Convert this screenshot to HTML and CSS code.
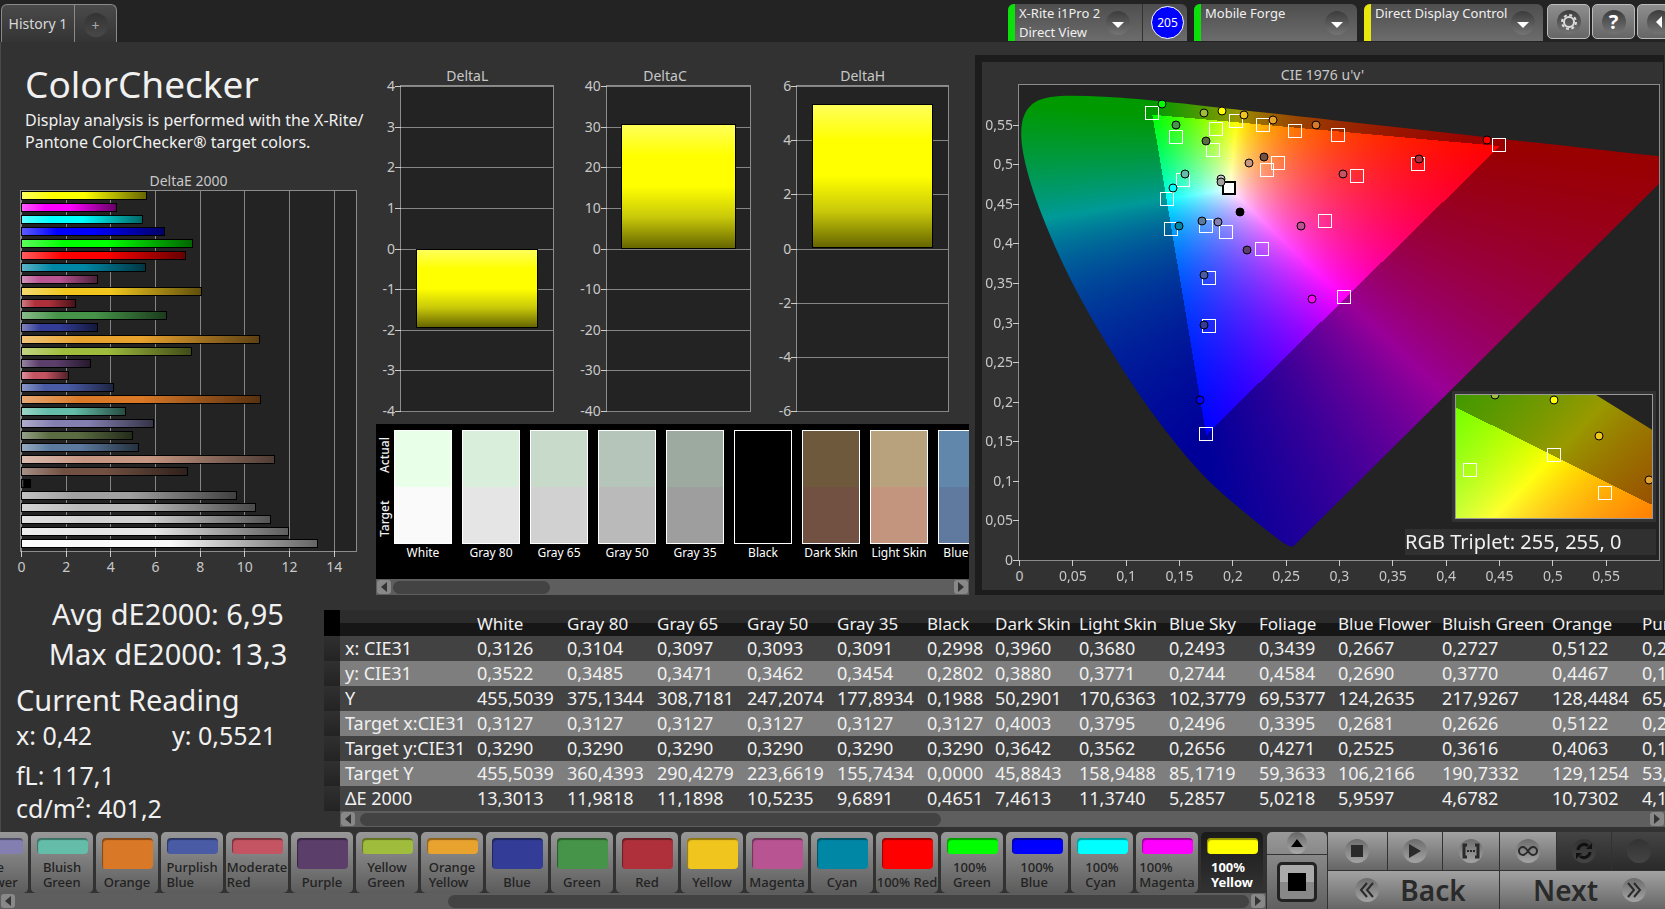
FILE: index.html
```html
<!DOCTYPE html>
<html lang="en">
<head>
    <title>ColorChecker</title>
    <meta charset="utf-8">
    <meta name="viewport" content="width=device-width, initial-scale=1.0">
    <link rel="stylesheet" href="styles.css">
</head>
<body>

    <header class="topbar">
        <nav class="tabs">
            <button class="tab">History 1</button>
            <button class="tab tab-add" aria-label="Add tab"><span class="knob">+</span></button>
        </nav>
        <div class="devices">
            <button class="device device-meter">
                <span class="strip green"></span>
                <span class="device-name">X-Rite i1Pro 2<br>Direct View</span>
                <span class="knob drop"><svg width="14" height="8"><path d="M1 1H13L7 7Z"/></svg></span>
                <span class="split"></span>
                <span class="badge">205</span>
            </button>
            <button class="device device-source">
                <span class="strip green"></span>
                <span class="device-name">Mobile Forge</span>
                <span class="knob drop"><svg width="14" height="8"><path d="M1 1H13L7 7Z"/></svg></span>
            </button>
            <button class="device device-display">
                <span class="strip yellow"></span>
                <span class="device-name">Direct Display Control</span>
                <span class="knob drop"><svg width="14" height="8"><path d="M1 1H13L7 7Z"/></svg></span>
            </button>
            <button class="tool" aria-label="Settings"><span class="knob">
                <svg width="20" height="20" viewBox="0 0 20 20"><circle cx="10" cy="10" r="5" fill="none" stroke="#ddd" stroke-width="2"/><circle cx="10" cy="10" r="7" fill="none" stroke="#ddd" stroke-width="2" stroke-dasharray="3 2.5"/></svg>
            </span></button>
            <button class="tool" aria-label="Help"><span class="knob">?</span></button>
            <button class="tool" aria-label="Collapse"><span class="knob"><svg width="8" height="14"><path d="M7 1V13L1 7Z" fill="#fff"/></svg></span></button>
        </div>
    </header>

    <main class="page">
        <div class="upper">
            <section class="intro">
                <h1>ColorChecker</h1>
                <p>Display analysis is performed with the X-Rite/<br>Pantone ColorChecker® target colors.</p>
                <h2 class="chart-title">DeltaE 2000</h2>
                <div class="plot de-plot" id="de"></div>
            </section>

            <section class="middle">
                <div class="deltas">
                    <div class="delta delta-l"><h2 class="chart-title">DeltaL</h2><div class="plot" id="dl"></div></div>
                    <div class="delta delta-c"><h2 class="chart-title">DeltaC</h2><div class="plot" id="dc"></div></div>
                    <div class="delta delta-h"><h2 class="chart-title">DeltaH</h2><div class="plot" id="dh"></div></div>
                </div>
                <div class="compare">
                    <div class="compare-row">
                        <div class="compare-side"><span>Actual</span><span>Target</span></div>
                        <div class="patches" id="patches"></div>
                    </div>
                    <div class="scrollbar scroll-patches">
                        <button class="arrow" aria-label="Left"><svg width="6" height="10"><path d="M6 0V10L0 5Z"/></svg></button>
                        <div class="track"><div class="thumb"></div></div>
                        <button class="arrow" aria-label="Right"><svg width="6" height="10"><path d="M0 0V10L6 5Z"/></svg></button>
                    </div>
                </div>
            </section>

            <section class="cie">
                <div class="cie-inner">
                    <h2 class="chart-title">CIE 1976 u'v'</h2>
                    <div class="plot cie-plot" id="cie">
                        <canvas id="cie-canvas"></canvas>
                        <div class="marks" id="cie-marks"></div>
                        <div class="inset"><div class="inset-view">
                            <canvas id="inset-canvas"></canvas>
                            <div class="marks clip" id="inset-marks"></div>
                        </div></div>
                        <div class="triplet">RGB Triplet: 255, 255, 0</div>
                    </div>
                </div>
            </section>
        </div>

        <div class="lower">
            <section class="stats">
                <div class="summary">Avg dE2000: 6,95</div>
                <div class="summary">Max dE2000: 13,3</div>
                <h2>Current Reading</h2>
                <div class="reading"><span>x: 0,42</span><span>y: 0,5521</span></div>
                <div class="reading lum">fL: 117,1</div>
                <div class="reading">cd/m²: 401,2</div>
            </section>

            <section class="results">
                <div class="table-view">
                <table>
                    <colgroup><col class="w-mark"><col class="w-label"><col class="w90"><col class="w90"><col class="w90"><col class="w90"><col class="w90"><col class="w68"><col class="w84"><col class="w90"><col class="w90"><col class="w79"><col class="w104"><col class="w110"><col class="w90"><col class="w110"></colgroup>
                    <thead>
                        <tr><th class="mark"></th><th></th><th>White</th><th>Gray 80</th><th>Gray 65</th><th>Gray 50</th><th>Gray 35</th><th>Black</th><th>Dark Skin</th><th>Light Skin</th><th>Blue Sky</th><th>Foliage</th><th>Blue Flower</th><th>Bluish Green</th><th>Orange</th><th>Purplish Blue</th></tr>
                    </thead>
                    <tbody>
                        <tr><td class="mark"></td><th>x: CIE31</th><td>0,3126</td><td>0,3104</td><td>0,3097</td><td>0,3093</td><td>0,3091</td><td>0,2998</td><td>0,3960</td><td>0,3680</td><td>0,2493</td><td>0,3439</td><td>0,2667</td><td>0,2727</td><td>0,5122</td><td>0,2146</td></tr>
                        <tr><td class="mark"></td><th>y: CIE31</th><td>0,3522</td><td>0,3485</td><td>0,3471</td><td>0,3462</td><td>0,3454</td><td>0,2802</td><td>0,3880</td><td>0,3771</td><td>0,2744</td><td>0,4584</td><td>0,2690</td><td>0,3770</td><td>0,4467</td><td>0,1977</td></tr>
                        <tr><td class="mark"></td><th>Y</th><td>455,5039</td><td>375,1344</td><td>308,7181</td><td>247,2074</td><td>177,8934</td><td>0,1988</td><td>50,2901</td><td>170,6363</td><td>102,3779</td><td>69,5377</td><td>124,2635</td><td>217,9267</td><td>128,4484</td><td>65,1830</td></tr>
                        <tr><td class="mark"></td><th>Target x:CIE31</th><td>0,3127</td><td>0,3127</td><td>0,3127</td><td>0,3127</td><td>0,3127</td><td>0,3127</td><td>0,4003</td><td>0,3795</td><td>0,2496</td><td>0,3395</td><td>0,2681</td><td>0,2626</td><td>0,5122</td><td>0,2158</td></tr>
                        <tr><td class="mark"></td><th>Target y:CIE31</th><td>0,3290</td><td>0,3290</td><td>0,3290</td><td>0,3290</td><td>0,3290</td><td>0,3290</td><td>0,3642</td><td>0,3562</td><td>0,2656</td><td>0,4271</td><td>0,2525</td><td>0,3616</td><td>0,4063</td><td>0,1909</td></tr>
                        <tr><td class="mark"></td><th>Target Y</th><td>455,5039</td><td>360,4393</td><td>290,4279</td><td>223,6619</td><td>155,7434</td><td>0,0000</td><td>45,8843</td><td>158,9488</td><td>85,1719</td><td>59,3633</td><td>106,2166</td><td>190,7332</td><td>129,1254</td><td>53,4120</td></tr>
                        <tr><td class="mark"></td><th>ΔE 2000</th><td>13,3013</td><td>11,9818</td><td>11,1898</td><td>10,5235</td><td>9,6891</td><td>0,4651</td><td>7,4613</td><td>11,3740</td><td>5,2857</td><td>5,0218</td><td>5,9597</td><td>4,6782</td><td>10,7302</td><td>4,1602</td></tr>
                    </tbody>
                </table>
                </div>
                <div class="scrollbar scroll-table">
                    <button class="arrow" aria-label="Left"><svg width="6" height="10"><path d="M6 0V10L0 5Z"/></svg></button>
                    <div class="track"><div class="thumb"></div></div>
                    <button class="arrow" aria-label="Right"><svg width="6" height="10"><path d="M0 0V10L6 5Z"/></svg></button>
                </div>
            </section>
        </div>
    </main>

    <footer class="dock">
        <div class="picker">
            <div class="chips" id="chips"></div>
            <div class="scrollbar scroll-chips">
                <button class="arrow" aria-label="Left"><svg width="6" height="10"><path d="M6 0V10L0 5Z"/></svg></button>
                <div class="track"><div class="thumb"></div></div>
                <button class="arrow" aria-label="Right"><svg width="6" height="10"><path d="M0 0V10L6 5Z"/></svg></button>
            </div>
        </div>
        <div class="window-ctl">
            <button class="up" aria-label="Expand"><span class="knob"><svg width="12" height="8"><path d="M0 8H12L6 0Z"/></svg></span></button>
            <button class="pattern" aria-label="Pattern window"><span></span></button>
        </div>
        <div class="transport">
            <button aria-label="Stop"><span class="knob"><svg width="12" height="12"><rect width="12" height="12"/></svg></span></button>
            <button aria-label="Play"><span class="knob"><svg width="12" height="14"><path d="M0 0L12 7L0 14Z"/></svg></span></button>
            <button aria-label="Step"><span class="knob"><svg width="18" height="16" viewBox="0 0 18 16"><path d="M5 2H2V14H5M13 2H16V14H13" fill="none" stroke="#2a2a2a" stroke-width="3"/><path d="M5 7h2v2H5zM8 7h2v2H8zM11 7h2v2h-2z"/></svg></span></button>
            <button aria-label="Continuous"><span class="knob"><svg width="20" height="12" viewBox="0 0 20 12"><path d="M10 6C8 3 7 2 5 2a4 4 0 0 0 0 8C7 10 8 9 10 6C12 3 13 2 15 2a4 4 0 0 1 0 8C13 10 12 9 10 6Z" fill="none" stroke="#2a2a2a" stroke-width="2"/></svg></span></button>
            <button class="off" aria-label="Refresh"><span class="knob"><svg width="18" height="18" viewBox="0 0 18 18"><path d="M3 8A6 6 0 0 1 13 4M15 10A6 6 0 0 1 5 14" fill="none" stroke="#111" stroke-width="3"/><path d="M11 7h6V1zM7 11H1v6z" fill="#111"/></svg></span></button>
            <button class="off" aria-label="Record"><span class="knob"></span></button>
            <button class="step back"><span class="knob"><svg width="16" height="16" viewBox="0 0 16 16"><path d="M8 1L2 8L8 15M14 1L8 8L14 15" fill="none" stroke="#2a2a2a" stroke-width="2"/></svg></span>Back</button>
            <button class="step next">Next<span class="knob"><svg width="16" height="16" viewBox="0 0 16 16"><path d="M2 1L8 8L2 15M8 1L14 8L8 15" fill="none" stroke="#2a2a2a" stroke-width="2"/></svg></span></button>
        </div>
    </footer>

    <script src="charts.js"></script>
</body>
</html>
```
FILE: styles.css
```css
* {
    box-sizing: border-box;
}

body {
    margin: 0;
    min-height: 100vh;
    display: flex;
    flex-direction: column;
    background: #323232;
    color: #f0f0f0;
    font-family: "Noto Sans", "Open Sans", sans-serif;
    font-size: 14px;
    overflow: hidden;
}

h1, h2, p {
    margin: 0;
    font-weight: normal;
}

button {
    margin: 0;
    padding: 0;
    border: 0;
    font-family: inherit;
    color: inherit;
    cursor: pointer;
}

svg {
    display: block;
}

.knob {
    flex: none;
    display: flex;
    align-items: center;
    justify-content: center;
    width: 24px;
    height: 24px;
    border-radius: 50%;
    background: linear-gradient(#3c3c3c, #747474);
}

/* top bar */
.topbar {
    display: flex;
    justify-content: space-between;
    align-items: flex-start;
    height: 42px;
    padding: 4px 0 0 1px;
    background: #232323;
    overflow: hidden;
}

.tabs {
    display: flex;
    height: 38px;
    border: 1px solid #8a8a8a;
    border-bottom: 0;
    border-radius: 6px 6px 0 0;
    background: linear-gradient(#4a4a4a, #343434);
}

.tab {
    width: 72px;
    background: none;
    color: #d8d8d8;
    font-size: 14px;
}

.tab-add {
    display: flex;
    align-items: center;
    justify-content: center;
    width: 42px;
    padding-top: 3px;
    border-left: 1px solid #8a8a8a;
}

.tab-add .knob {
    background: linear-gradient(#333, #484848);
    color: #aaa;
}

.devices {
    display: flex;
    flex: none;
    width: 657px;
}

.device {
    flex: none;
    display: flex;
    align-items: center;
    height: 37px;
    margin-right: 7px;
    border-radius: 6px 6px 0 0;
    background: linear-gradient(#4e4e4e, #6c6c6c);
    overflow: hidden;
}

.device-meter { width: 179px; }
.device-source { width: 163px; }
.device-display { width: 179px; margin-right: 4px; }

.strip {
    width: 7px;
    height: 37px;
}

.green { background: #0be00b; }
.yellow { background: #e8e80c; }

.device-name {
    flex: 1;
    height: 37px;
    padding-left: 4px;
    font-size: 13px;
    line-height: 19px;
    text-align: left;
    white-space: nowrap;
}

.drop {
    margin-right: 8px;
    padding-top: 4px;
}

.drop svg {
    fill: #fff;
}

.device-meter .drop {
    margin-right: 12px;
}

.split {
    width: 1px;
    height: 37px;
    background: #333;
}

.badge {
    width: 33px;
    height: 33px;
    margin-right: 3px;
    margin-left: 8px;
    border: 1px solid #fff;
    border-radius: 50%;
    background: #0000ff;
    color: #fff;
    font-size: 12px;
    line-height: 31px;
}

.tool {
    flex: none;
    display: flex;
    align-items: center;
    justify-content: center;
    width: 43px;
    height: 35px;
    margin-right: 2px;
    border: 1px solid #bbb;
    border-radius: 5px;
    background: linear-gradient(#8e8e8e, #666);
    color: #fff;
    font-size: 20px;
    font-weight: bold;
}

/* upper area */
.page {
    flex: 1;
    border-left: 1px solid #4a4a4a;
}

.upper {
    display: grid;
    grid-template-columns: 374px minmax(0, 600fr) minmax(0, 690fr);
    height: 552px;
}

.intro {
    padding: 16px 0 0 19px;
}

.intro h1 {
    margin-left: 5px;
    font-size: 37px;
    line-height: 51px;
}

.intro p {
    margin-left: 5px;
    font-size: 16px;
    line-height: 22px;
    white-space: nowrap;
}

.chart-title {
    color: #c8c8c8;
    font-size: 14px;
    line-height: 18px;
    text-align: center;
}

.plot {
    position: relative;
    border: 1px solid #8c8c8c;
    background: #232323;
    color: #c8c8c8;
}

.intro .chart-title {
    width: 337px;
    margin-top: 19px;
}

.de-plot {
    width: 337px;
    height: 362px;
}

.bars {
    display: grid;
    row-gap: 3px;
    position: relative;
}

.bar {
    height: 9px;
    border: 1px solid #000;
    background-image: linear-gradient(90deg, rgba(255, 255, 255, .36), transparent 25%, transparent 50%, rgba(0, 0, 0, .6));
}

.grid-x, .grid-y {
    position: absolute;
    background: #858585;
}

.grid-x { top: 0; bottom: 0; width: 1px; }
.grid-y { left: 0; right: 0; height: 1px; }

.grid-x span {
    position: absolute;
    top: 100%;
    left: -20px;
    width: 41px;
    padding-top: 6px;
    line-height: 20px;
    text-align: center;
}

.grid-x span::before {
    content: "";
    position: absolute;
    top: 0;
    left: 20px;
    width: 1px;
    height: 6px;
    background: #ccc;
}

.grid-y span {
    position: absolute;
    right: 100%;
    top: -10px;
    padding-right: 6px;
    line-height: 20px;
    white-space: nowrap;
}

.grid-y span::before {
    content: "";
    position: absolute;
    top: 10px;
    right: 0;
    width: 6px;
    height: 1px;
    background: #ccc;
}

.middle {
    padding-top: 25px;
}

.deltas {
    display: grid;
    grid-template-columns: 1fr 1fr 1fr;
    column-gap: 25px;
    padding: 0 26px 0 6px;
}

.delta .plot { height: 327px; }
.delta-l .plot { margin-left: 19px; }
.delta-c .plot { margin-left: 27px; }
.delta-h .plot { margin-left: 20px; }

.column {
    position: absolute;
    left: 10%;
    right: 10%;
    border: 1px solid #000;
    background: linear-gradient(#ffff5a, #ffff00 25%, #ffff00 50%, #c8c80a 75%, #666600);
}

.compare {
    margin: 12px 6px 0 1px;
    background: #000;
    overflow: hidden;
}

.compare-row {
    display: flex;
    height: 155px;
    padding-top: 6px;
}

.compare-side {
    flex: none;
    display: flex;
    width: 18px;
    height: 114px;
    padding: 7px 0;
    writing-mode: vertical-rl;
    transform: rotate(180deg);
    flex-direction: row-reverse;
    justify-content: space-between;
    line-height: 18px;
    font-size: 12px;
    font-weight: 500;
}

.patches {
    display: flex;
    column-gap: 10px;
    overflow: hidden;
}

.patch {
    flex: none;
    width: 58px;
    color: #fff;
    font-size: 12px;
    line-height: 18px;
    text-align: center;
    white-space: nowrap;
}

.patch-color {
    display: grid;
    grid-template-rows: 1fr 1fr;
    height: 114px;
    border: 1px solid #fff;
}

/* scroll bars */
.scrollbar {
    display: flex;
    align-items: center;
    height: 16px;
    padding: 1px;
    background: #5e5e5e;
}

.arrow {
    flex: none;
    display: flex;
    align-items: center;
    justify-content: center;
    width: 14px;
    height: 14px;
    border-radius: 3px;
    background: #888;
}

.arrow svg {
    fill: #333;
}

.track {
    flex: 1;
    padding: 0 2px;
}

.thumb {
    height: 13px;
    border-radius: 7px;
    background: #434343;
}

.scroll-patches .thumb { width: 28%; }
.scroll-table .thumb { width: 45%; margin-left: 3px; }
.scroll-chips .thumb { width: 65%; margin-left: auto; }

/* chromaticity */
.cie {
    margin: 13px 1px 0 0;
    border: 7px solid #1c1c1c;
    border-right-width: 1px;
    border-bottom-width: 5px;
    background: #323232;
}

.cie-inner {
    padding: 4px 3px 28px 36px;
}

.cie-plot {
    height: 477px;
}

.cie .chart-title {
    margin-left: -33px;
}

canvas {
    display: block;
    width: 100%;
    height: 100%;
}

.marks {
    position: absolute;
    top: 0;
    right: 0;
    bottom: 0;
    left: 0;
}

.clip {
    overflow: hidden;
}

.target, .actual {
    position: absolute;
    transform: translate(-50%, -50%);
}

.target {
    width: 14px;
    height: 14px;
    border: 1px solid #fff;
}

.target.current {
    border: 2px solid #000;
}

.actual {
    width: 9px;
    height: 9px;
    border: 1px solid #000;
    border-radius: 50%;
}

.inset {
    position: absolute;
    right: 3px;
    bottom: 38px;
    width: 204px;
    height: 131px;
    padding: 3px;
    background: #323232;
}

.inset-view {
    position: relative;
    height: 125px;
    border: 1px solid #999;
    background: #232323;
}

.triplet {
    position: absolute;
    right: 3px;
    bottom: 5px;
    width: 251px;
    background: #303030;
    color: #f0f0f0;
    font-size: 20px;
    line-height: 26px;
    white-space: nowrap;
}

/* readings and table */
.lower {
    display: grid;
    grid-template-columns: 323px minmax(0, 1fr);
}

.stats {
    padding-left: 15px;
}

.summary {
    margin-right: 4px;
    font-size: 29px;
    line-height: 40px;
    text-align: center;
}

.stats h2 {
    margin-top: 7px;
    font-size: 29px;
    line-height: 38px;
}

.reading {
    display: grid;
    grid-template-columns: 156px 1fr;
    font-size: 25px;
    line-height: 33px;
}

.lum {
    margin-top: 7px;
}

.results {
    padding-top: 16px;
}

.table-view {
    overflow: hidden;
}

table {
    width: 1420px;
    table-layout: fixed;
    border-collapse: collapse;
    font-size: 18px;
}

.w-mark { width: 16px; }
.w-label { width: 132px; }
.w68 { width: 68px; }
.w79 { width: 79px; }
.w84 { width: 84px; }
.w90 { width: 90px; }
.w104 { width: 104px; }
.w110 { width: 110px; }

th, td {
    height: 25px;
    padding: 0 0 0 5px;
    font-weight: normal;
    line-height: 25px;
    text-align: left;
    white-space: nowrap;
}

thead th {
    height: 26px;
    background: linear-gradient(#2c2c2c 50%, #161616 50%);
    font-size: 17px;
}

tbody tr { background: #424242; }
tbody tr:nth-child(even) { background: #7e7e7e; }

tbody .mark {
    padding: 0;
    background: linear-gradient(#303030, #232323);
}

thead .mark {
    background: #000;
}

.scroll-table {
    margin-left: 16px;
}

/* bottom dock */
.dock {
    display: grid;
    grid-template-columns: minmax(0, 1fr) 60px 337px;
    column-gap: 1px;
    height: 77px;
    background: #323232;
}

.chips {
    display: flex;
    justify-content: flex-end;
    column-gap: 3px;
    height: 61px;
    padding-right: 3px;
    overflow: hidden;
}

.chip {
    flex: none;
    display: flex;
    flex-direction: column;
    align-items: center;
    justify-content: space-between;
    width: 62px;
    padding: 6px 0 3px;
    border-radius: 5px;
    background: linear-gradient(#989898, #5c5c5c);
    color: #222;
    font-size: 13px;
    font-weight: 500;
    line-height: 15px;
    text-align: left;
    white-space: nowrap;
}

.chip-color {
    width: 51px;
    height: 31px;
    border-radius: 4px;
    box-shadow: inset 1px 2px 1px rgba(0, 0, 0, .4);
}

.chip-color.short {
    height: 16px;
}

.chip.selected {
    background: linear-gradient(#1a1a1a, #333);
    color: #fff;
    font-weight: bold;
}

.window-ctl {
    display: flex;
    flex-direction: column;
    border-radius: 5px 5px 0 0;
    background: linear-gradient(#999, #606060);
}

.up {
    display: flex;
    justify-content: center;
    height: 23px;
    border-bottom: 1px solid #333;
    background: none;
}

.up .knob {
    height: 22px;
    width: 20px;
    background: linear-gradient(#666, #aaa);
}

.pattern {
    width: 40px;
    height: 40px;
    margin: 7px auto;
    padding: 8px;
    border: 3px solid #222;
    border-radius: 5px;
    background: linear-gradient(#aaa 50%, #888 50%);
}

.pattern span {
    display: block;
    height: 18px;
    background: #000;
}

.transport {
    display: grid;
    grid-template-columns: 59fr 55fr 56fr 56fr 55fr 53fr;
    grid-template-rows: 38px 38px;
    gap: 1px;
    background: #323232;
}

.transport button {
    display: flex;
    align-items: center;
    justify-content: center;
    background: linear-gradient(#a2a2a2, #666);
}

.transport .knob {
    background: linear-gradient(#6c6c6c, #a4a4a4);
}

.transport .off {
    background: linear-gradient(#444, #2a2a2a);
}

.transport .off .knob {
    background: linear-gradient(#333, #444);
}

.transport .step {
    grid-column: span 3;
    color: #2a2a2a;
    font-size: 28px;
    font-weight: 600;
}

.transport .back {
    gap: 21px;
    padding-right: 6px;
}

.transport .next {
    gap: 24px;
    padding-left: 14px;
}

.transport svg {
    fill: #2a2a2a;
}
```
FILE: charts.js
```javascript
var bars = [
    [5.66, '#ffff00'], [4.28, '#ff00ff'], [5.45, '#00ffff'], [6.47, '#0000ff'], [7.7, '#00ff00'], [7.38, '#ff0000'],
    [5.58, '#0087a5'], [3.43, '#b95492'], [8.12, '#efc51e'], [2.45, '#af303b'], [6.53, '#469449'], [3.45, '#333c96'],
    [10.7, '#e8a22e'], [7.65, '#a0bc3c'], [3.13, '#5c3e6b'], [2.15, '#c55463'], [4.16, '#495ba5'], [10.73, '#d97827'],
    [4.68, '#63bda8'], [5.96, '#837fb0'], [5.02, '#5a6c42'], [5.29, '#5b7a9e'], [11.37, '#c59682'], [7.46, '#735142'],
    [0.46, '#000000'], [9.69, '#a0a0a0'], [10.52, '#bababa'], [11.19, '#d2d2d2'], [11.98, '#e6e6e6'], [13.3, '#fafafa']
];

var patches = [
    ['White', '#e8ffe8', '#fafafa'], ['Gray 80', '#daeedc', '#e5e5e5'], ['Gray 65', '#c8daca', '#d1d1d1'],
    ['Gray 50', '#b5c5b9', '#bababa'], ['Gray 35', '#9caaa0', '#9e9e9e'], ['Black', '#000000', '#000000'],
    ['Dark Skin', '#6f593c', '#735142'], ['Light Skin', '#b8a27e', '#c3957f'], ['Blue Sky', '#6188aa', '#5f7a9e']
];

var chips = [
    ['Blue<br>Flower', '#837fb0'], ['Bluish<br>Green', '#63bda8'], ['Orange', '#d97827'], ['Purplish<br>Blue', '#495ba5'],
    ['Moderate<br>Red', '#c55463'], ['Purple', '#5c3e6b'], ['Yellow<br>Green', '#a0bc3c'], ['Orange<br>Yellow', '#e8a22e'],
    ['Blue', '#333c96'], ['Green', '#469449'], ['Red', '#af303b'], ['Yellow', '#efc51e'], ['Magenta', '#b95492'],
    ['Cyan', '#0087a5'], ['100% Red', '#ff0000'], ['100%<br>Green', '#00ff00'], ['100%<br>Blue', '#0000ff'],
    ['100%<br>Cyan', '#00ffff'], ['100%<br>Magenta', '#ff00ff'], ['100%<br>Yellow', '#ffff00']
];

// u'v' of the targets and of the measured colors
var targets = [
    [.1245, .5641], [.147, .5342], [.1844, .5447], [.2032, .5544], [.2286, .5498], [.2586, .5414], [.2988, .5363],
    [.4502, .5245], [.1815, .5182], [.2426, .501], [.2323, .493], [.3169, .4846], [.3743, .4997], [.1536, .4795],
    [.1384, .4564], [.1429, .4181], [.1749, .4215], [.1942, .4143], [.2865, .4278], [.2274, .3929], [.1782, .3563],
    [.3045, .3319], [.1782, .2956], [.1749, .1589]
];
var actuals = [
    [.1343, .5763, '#00ff00'], [.147, .5498, '#469449'], [.1737, .5649, '#a0bc3c'], [.1905, .567, '#ffff00'],
    [.2106, .562, '#efc51e'], [.2381, .5561, '#e8a22e'], [.2787, .5498, '#d97827'], [.4387, .5308, '#ff0000'],
    [.1749, .5292, '#5a6c42'], [.2298, .509, '#735142'], [.2159, .5018, '#c59682'], [.3747, .5064, '#af303b'],
    [.3041, .4879, '#c55463'], [.1556, .4879, '#63bda8'], [.1446, .4703, '#00ffff'], [.1893, .4816, '#cccccc'],
    [.1893, .4778, '#a0a0a0'], [.2069, .44, '#000000'], [.1712, .4286, '#5b7a9e'], [.1868, .4265, '#837fb0'],
    [.1499, .4219, '#0087a5'], [.2647, .4219, '#b95492'], [.2135, .392, '#5c3e6b'], [.1737, .3601, '#495ba5'],
    [.275, .3302, '#ff00ff'], [.1737, .297, '#333c96'], [.17, .2026, '#0000ff']
];

// CIE 1931 spectral locus
var locus = [
    [.1741, .005], [.1714, .0051], [.1644, .0109], [.1566, .0177], [.144, .0297], [.1355, .0399], [.1241, .0578],
    [.1096, .0868], [.0913, .1327], [.0687, .2007], [.0454, .295], [.0235, .4127], [.0082, .5384], [.0039, .6548],
    [.0139, .7502], [.0389, .812], [.0743, .8338], [.1142, .8262], [.1547, .8059], [.2296, .7543], [.3016, .6923],
    [.3731, .6245], [.4441, .5547], [.5125, .4866], [.5752, .4242], [.627, .3725], [.6658, .334], [.6915, .3083],
    [.719, .2809], [.7347, .2653]
];

function add(parent, cls, text) {
    var el = document.createElement('div');
    el.className = cls;
    if (text) el.innerHTML = text;
    parent.appendChild(el);
    return el;
}

function label(v) {
    return String(Math.round(v * 100) / 100).replace('.', ',');
}

function gridX(plot, max, step, end) {
    for (var v = 0; v <= end + 0.001; v += step) {
        add(plot, 'grid-x', '<span>' + label(v) + '</span>').style.left = v / max * 100 + '%';
    }
}

function gridY(plot, min, max, step, end) {
    for (var v = min; v <= end + 0.001; v += step) {
        add(plot, 'grid-y', '<span>' + label(v) + '</span>').style.top = (max - v) / (max - min) * 100 + '%';
    }
}

function deltaChart(id, max, step, value) {
    var plot = document.getElementById(id);
    gridY(plot, -max, max, step, max);
    var col = add(plot, 'column');
    col.style.top = (max - Math.max(value, 0)) / (2 * max) * 100 + '%';
    col.style.height = Math.abs(value) / (2 * max) * 100 + '%';
}

function toUv(p) {
    var d = -2 * p[0] + 12 * p[1] + 3;
    return [4 * p[0] / d, 9 * p[1] / d];
}

function toXy(u, v) {
    var d = 6 * u - 16 * v + 12;
    return [9 * u / d, 4 * v / d];
}

// full-brightness color of a chromaticity, dimmed outside the Rec.709 triangle
function shade(x, y) {
    var X = x / y, Z = (1 - x - y) / y;
    var rgb = [3.2406 * X - 1.5372 - 0.4986 * Z, -0.9689 * X + 1.8758 + 0.0415 * Z, 0.0557 * X - 0.204 + 1.057 * Z];
    var k = Math.min(rgb[0], rgb[1], rgb[2]) < 0 ? 153 : 255;
    var m = Math.max(rgb[0], rgb[1], rgb[2]);
    return rgb.map(function (c) {
        return k * Math.max(c, 0) / m;
    });
}

function paint(id, x0, x1, y0, y1, uv) {
    var canvas = document.getElementById(id);
    var w = canvas.width = canvas.clientWidth;
    var h = canvas.height = canvas.clientHeight;
    var ctx = canvas.getContext('2d');
    var img = ctx.createImageData(w, h);
    for (var j = 0; j < h; j++) {
        for (var i = 0; i < w; i++) {
            var x = x0 + (i + 0.5) / w * (x1 - x0);
            var y = y1 - (j + 0.5) / h * (y1 - y0);
            var p = uv ? toXy(x, y) : [x, y];
            var c = shade(p[0], p[1]);
            var o = (j * w + i) * 4;
            img.data[o] = c[0];
            img.data[o + 1] = c[1];
            img.data[o + 2] = c[2];
            img.data[o + 3] = 255;
        }
    }
    ctx.putImageData(img, 0, 0);

    var pts = locus.map(function (p) {
        var q = uv ? toUv(p) : p;
        return [(q[0] - x0) / (x1 - x0) * w, (y1 - q[1]) / (y1 - y0) * h];
    });
    ctx.globalCompositeOperation = 'destination-in';
    ctx.beginPath();
    ctx.moveTo(pts[0][0], pts[0][1]);
    for (var n = 1; n < pts.length - 1; n++) {
        ctx.quadraticCurveTo(pts[n][0], pts[n][1], (pts[n][0] + pts[n + 1][0]) / 2, (pts[n][1] + pts[n + 1][1]) / 2);
    }
    ctx.lineTo(pts[n][0], pts[n][1]);
    ctx.closePath();
    ctx.fill();
}

function place(id, cls, x, y, color) {
    var el = add(document.getElementById(id), cls);
    el.style.left = x * 100 + '%';
    el.style.top = y * 100 + '%';
    if (color) el.style.backgroundColor = color;
}

var de = document.getElementById('de');
gridX(de, 15, 2, 14);
var list = add(de, 'bars');
bars.forEach(function (b) {
    var el = add(list, 'bar');
    el.style.width = b[0] / 15 * 100 + '%';
    el.style.backgroundColor = b[1];
});

deltaChart('dl', 4, 1, -1.95);
deltaChart('dc', 40, 10, 30.6);
deltaChart('dh', 6, 2, 5.35);

patches.forEach(function (p) {
    var el = add(document.getElementById('patches'), 'patch', '<div class="patch-color"><i></i><i></i></div>' + p[0]);
    var halves = el.querySelectorAll('i');
    halves[0].style.backgroundColor = p[1];
    halves[1].style.backgroundColor = p[2];
});

chips.forEach(function (c, i) {
    var b = document.createElement('button');
    var tall = c[0].indexOf('<br>') < 0;
    b.className = 'chip' + (i === chips.length - 1 ? ' selected' : '');
    b.innerHTML = '<span class="chip-color' + (tall ? '' : ' short') + '"></span><span>' + c[0] + '</span>';
    b.firstChild.style.backgroundColor = c[1];
    document.getElementById('chips').appendChild(b);
});

var cie = document.getElementById('cie');
for (var t = 0; t < 12; t++) {
    var tx = add(cie, 'grid-x', '<span>' + label(t * 0.05) + '</span>');
    tx.style.left = t * 0.05 / 0.6 * 100 + '%';
    var ty = add(cie, 'grid-y', '<span>' + label(t * 0.05) + '</span>');
    ty.style.top = (1 - t * 0.05 / 0.6) * 100 + '%';
    tx.style.background = ty.style.background = 'none';
}

function draw() {
    paint('cie-canvas', 0, 0.6, 0, 0.6, true);
    paint('inset-canvas', 0.3676, 0.4715, 0.4526, 0.5568, false);
}
draw();
window.addEventListener('resize', draw);

targets.forEach(function (p) {
    place('cie-marks', 'target', p[0] / 0.6, 1 - p[1] / 0.6);
});
place('cie-marks', 'target current', 0.1966 / 0.6, 1 - 0.4694 / 0.6, '#ffffff');
actuals.forEach(function (p) {
    place('cie-marks', 'actual', p[0] / 0.6, 1 - p[1] / 0.6, p[2]);
});
place('inset-marks', 'target', 0.07, 0.61);
place('inset-marks', 'target', 0.5, 0.49);
place('inset-marks', 'target', 0.76, 0.8);
place('inset-marks', 'actual', 0.2, 0, '#a0bc3c');
place('inset-marks', 'actual', 0.5, 0.04, '#ffff00');
place('inset-marks', 'actual', 0.73, 0.33, '#efc51e');
place('inset-marks', 'actual', 0.985, 0.69, '#e8a22e');
```
